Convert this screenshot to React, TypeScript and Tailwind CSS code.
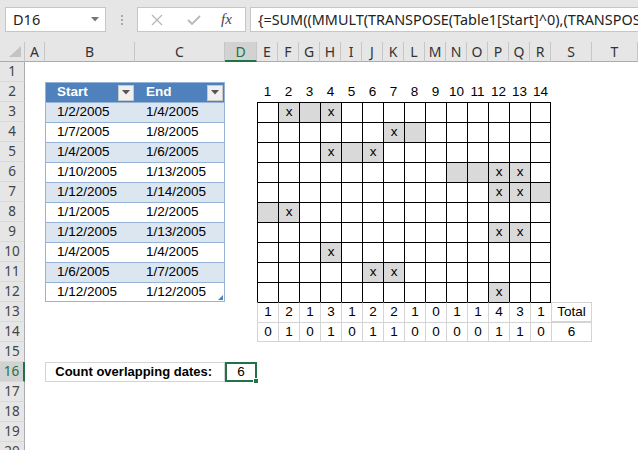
import React from 'react'

const letters = ['A', 'B', 'C', 'D', 'E', 'F', 'G', 'H', 'I', 'J', 'K', 'L', 'M', 'N', 'O', 'P', 'Q', 'R', 'S', 'T', 'U']
const widths = [20, 90, 90, 32, 21, 21, 21, 21, 21, 21, 21, 21, 21, 21, 21, 21, 21, 21, 41, 46, 40]

const dates = [
  ['1/2/2005', '1/4/2005'],
  ['1/7/2005', '1/8/2005'],
  ['1/4/2005', '1/6/2005'],
  ['1/10/2005', '1/13/2005'],
  ['1/12/2005', '1/14/2005'],
  ['1/1/2005', '1/2/2005'],
  ['1/12/2005', '1/13/2005'],
  ['1/4/2005', '1/4/2005'],
  ['1/6/2005', '1/7/2005'],
  ['1/12/2005', '1/12/2005'],
]

// shaded day range and marked days for rows 3..12
const spans: [number, number, number[]][] = [
  [2, 4, [2, 4]],
  [7, 8, [7]],
  [4, 6, [4, 6]],
  [10, 13, [12, 13]],
  [12, 14, [12, 13]],
  [1, 2, [2]],
  [12, 13, [12, 13]],
  [4, 4, [4]],
  [6, 7, [6, 7]],
  [12, 12, [12]],
]

const counts = [1, 2, 1, 3, 1, 2, 2, 1, 0, 1, 1, 4, 3, 1]
const overlaps = [0, 1, 0, 1, 0, 1, 1, 0, 0, 0, 0, 1, 1, 0]

const cellFont = { fontFamily: '"Liberation Sans", Arial, sans-serif' }

function FilterButton() {
  return (
    <div className="w-[16px] h-[16px] bg-[#f0f0f0] border border-[#c8c8c8] flex items-center justify-center">
      <svg width="8" height="5" viewBox="0 0 8 5">
        <path d="M0 0 L8 0 L4 4.5 Z" fill="#555" />
      </svg>
    </div>
  )
}

function cell(r: number, c: number): { text?: React.ReactNode; cls: string } {
  // table B2:C12
  if ((c === 1 || c === 2) && r >= 2 && r <= 12) {
    const side = c === 1 ? 'border-l' : 'border-r'
    if (r === 2) {
      return {
        text: (
          <div className="flex items-center justify-between w-full pl-[11px] pr-[1px]">
            <span className="font-bold text-white">{c === 1 ? 'Start' : 'End'}</span>
            <FilterButton />
          </div>
        ),
        cls: `bg-[#4f81bd] border-t border-[#95b3d7] ${side}`,
      }
    }
    const band = r % 2 === 1 ? 'bg-[#dce6f1]' : 'bg-white'
    const last = r === 12 ? 'border-b' : ''
    return {
      text: <span className="pl-[11px]">{dates[r - 3][c - 1]}</span>,
      cls: `${band} border-t border-[#95b3d7] ${side} ${last}`,
    }
  }
  // day numbers
  if (r === 2 && c >= 4 && c <= 17) {
    return { text: <span className="w-full text-center">{c - 3}</span>, cls: '' }
  }
  // day grid
  if (r >= 3 && r <= 12 && c >= 4 && c <= 17) {
    const day = c - 3
    const [s, e, xs] = spans[r - 3]
    const shade = day >= s && day <= e ? 'bg-[#d9d9d9]' : 'bg-white'
    const right = c === 17 ? 'border-r' : ''
    return {
      text: xs.includes(day) ? <span className="w-full text-center">x</span> : null,
      cls: `${shade} border-t border-l border-black ${right}`,
    }
  }
  if (r === 13 && c >= 4 && c <= 17) {
    return {
      text: <span className="w-full text-center">{counts[c - 4]}</span>,
      cls: 'border-t border-l border-t-black border-l-[#d4d4d4]',
    }
  }
  if (r === 14 && c >= 4 && c <= 17) {
    return {
      text: <span className="w-full text-center">{overlaps[c - 4]}</span>,
      cls: 'border-t border-l border-b border-[#d4d4d4]',
    }
  }
  if (r === 13 && c === 18) {
    return { text: <span className="w-full text-center">Total</span>, cls: 'border border-[#d4d4d4]' }
  }
  if (r === 14 && c === 18) {
    return { text: <span className="w-full text-center">6</span>, cls: 'border-t border-r border-l border-b border-[#d4d4d4]' }
  }
  return { cls: '' }
}

function Row({ r }: { r: number }) {
  const selected = r === 16
  return (
    <div className="flex h-[20px]">
      <div
        className={`w-[25px] shrink-0 flex items-center justify-center text-[13.5px] border-b border-b-[#d9d9d9] ${
          selected ? 'bg-[#d2d2d2] text-[#217346] border-r-2 border-r-[#217346]' : 'bg-[#e6e6e6] text-[#444] border-r border-r-[#ababab]'
        }`}
        style={{ fontFamily: '"Noto Sans", "Open Sans", sans-serif' }}
      >
        {r}
      </div>
      {r === 16 ? (
        <>
          <div style={{ width: widths[0] }} className="shrink-0" />
          <div className="w-[180px] shrink-0 border border-[#d4d4d4] flex items-center justify-end pr-[12px] font-bold text-[13px]">
            Count overlapping dates:
          </div>
          <div className="w-[32px] shrink-0 relative border-2 border-[#217346] flex items-center justify-center">
            6
            <div className="absolute right-[-4px] bottom-[-4px] w-[6px] h-[6px] bg-[#217346] border border-white" />
          </div>
        </>
      ) : (
        widths.map((w, c) => {
          const { text, cls } = cell(r, c)
          return (
            <div key={c} style={{ width: w }} className={`shrink-0 flex items-center relative ${cls}`}>
              {text}
              {r === 12 && c === 2 && (
                <svg className="absolute right-[1px] bottom-[1px]" width="5" height="5" viewBox="0 0 5 5">
                  <path d="M5 0 L5 5 L0 5 Z" fill="#4f81bd" />
                </svg>
              )}
            </div>
          )
        })
      )}
    </div>
  )
}

export default function App() {
  const rows = Array.from({ length: 20 }, (_, i) => i + 1)
  return (
    <div className="w-[638px] h-[450px] overflow-hidden bg-white text-black" style={{ fontFamily: '"Noto Sans", "Open Sans", sans-serif' }}>
      {/* formula bar */}
      <div className="h-[42px] bg-[#e6e6e6] flex items-start pt-[7px] pl-[5px]">
        <div className="w-[101px] h-[25px] bg-white border border-[#c6c6c6] flex items-center justify-between pl-[7px] pr-[6px] text-[14.5px] text-[#222]">
          <span>D16</span>
          <svg width="8" height="5" viewBox="0 0 8 5">
            <path d="M0 0 L8 0 L4 4.5 Z" fill="#777" />
          </svg>
        </div>
        <div className="w-[31px] h-[25px] flex flex-col items-center justify-center gap-[2px]">
          <div className="w-[2px] h-[2px] bg-[#aaa]" />
          <div className="w-[2px] h-[2px] bg-[#aaa]" />
          <div className="w-[2px] h-[2px] bg-[#aaa]" />
        </div>
        <div className="w-[109px] h-[25px] bg-white border border-[#c6c6c6] flex items-center">
          <svg className="ml-[13px]" width="12" height="12" viewBox="0 0 12 12">
            <path d="M1 1 L11 11 M11 1 L1 11" stroke="#b8b8b8" strokeWidth="1.3" />
          </svg>
          <svg className="ml-[24px]" width="14" height="12" viewBox="0 0 14 12">
            <path d="M1 6 L5 10 L13 2" stroke="#b8b8b8" strokeWidth="1.8" fill="none" />
          </svg>
          <span className="ml-[20px] text-[15px] italic text-[#444]" style={{ fontFamily: '"Liberation Serif", "Times New Roman", serif' }}>
            fx
          </span>
        </div>
        <div className="ml-[4px] flex-1 h-[25px] bg-white border border-r-0 border-[#c6c6c6] flex items-center pl-[7px] overflow-hidden whitespace-nowrap text-[14.4px] text-[#222]">
          {'{=SUM((MMULT(TRANSPOSE(Table1[Start]^0),(TRANSPOSE(MIN(Table1[End]'}
        </div>
      </div>

      {/* column headers */}
      <div className="flex h-[20px] bg-[#e6e6e6] text-[14px] text-[#333]">
        <div className="w-[25px] shrink-0 border-r border-[#c6c6c6] border-b border-b-[#ababab] flex items-end justify-end pr-[3px] pb-[4px]">
          <svg width="12" height="11" viewBox="0 0 12 11">
            <path d="M12 0 L12 11 L0 11 Z" fill="#c3c3c3" />
          </svg>
        </div>
        {widths.map((w, c) => (
          <div
            key={c}
            style={{ width: w }}
            className={`shrink-0 flex items-center justify-center ${
              c === 3
                ? 'bg-[#d2d2d2] text-[#217346] border-b-2 border-b-[#217346] border-r border-r-[#c6c6c6]'
                : 'border-r border-r-[#c6c6c6] border-b border-b-[#ababab]'
            }`}
          >
            {letters[c]}
          </div>
        ))}
      </div>

      {/* sheet */}
      <div className="text-[13.5px]" style={cellFont}>
        {rows.map((r) => (
          <Row key={r} r={r} />
        ))}
      </div>
    </div>
  )
}
